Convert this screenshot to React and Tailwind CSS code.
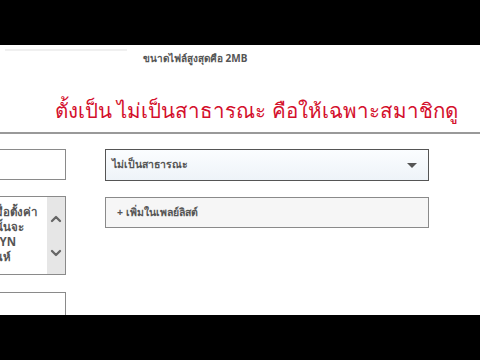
import { ChevronUp, ChevronDown } from "lucide-react";

const thai = { fontFamily: '"Noto Sans", "DejaVu Sans", sans-serif' };

export default function App() {
  return (
    <div className="w-[480px] h-[360px] bg-black flex flex-col overflow-hidden" style={thai}>
      <div className="h-[45px] shrink-0" />

      <div className="h-[270px] shrink-0 bg-white flex flex-col overflow-hidden">
        <div className="flex items-start">
          <div className="w-[122px] h-[2px] bg-[#f0f0f0] ml-[5px] mt-[4px]" />
          <p className="ml-[16px] mt-[7px] text-[10px] leading-[12px] font-bold text-[#555] whitespace-nowrap">
            ขนาดไฟล์สูงสุดคือ 2MB
          </p>
        </div>

        <h1 className="mt-[30px] ml-[55px] text-[20.5px] leading-[32px] text-[#d4102c] whitespace-nowrap">
          ตั้งเป็น ไม่เป็นสาธารณะ คือให้เฉพาะสมาชิกดู
        </h1>

        <div className="mt-[6px] h-[2px] shrink-0 bg-[#999]" />

        <div className="flex gap-[39px] mt-[15px]">
          {/* left column, cut off by the frame edge */}
          <div className="w-[66px] shrink-0 flex flex-col">
            <div className="h-[31px] border border-l-0 border-[#8a8a8a] bg-white" />

            <div className="mt-[16px] h-[79px] border border-l-0 border-[#8a8a8a] flex">
              <div className="flex-1 min-w-0 overflow-hidden flex flex-col items-end pt-[7px] text-[11.5px] leading-[15px] font-bold text-[#555] whitespace-nowrap">
                <span className="mr-[10px]">เมื่อตั้งค่า</span>
                <span className="mr-[23px]">หลังจากนั้นจะ</span>
                <span className="mr-[31px]">ดูวิดีโอ YN</span>
                <span className="mr-[36px]">ของคุณห์</span>
              </div>
              <div className="w-[18px] shrink-0 bg-[#e6e6e6] flex flex-col items-center justify-center gap-[18px] text-[#666]">
                <ChevronUp size={16} strokeWidth={3.5} />
                <ChevronDown size={16} strokeWidth={3.5} />
              </div>
            </div>

            <div className="mt-[17px] h-[40px] border border-l-0 border-[#8a8a8a] bg-white" />
          </div>

          {/* right column */}
          <div className="w-[324px] shrink-0 flex flex-col gap-[16px]">
            <div className="h-[32px] border border-[#555] bg-gradient-to-b from-[#fbfdff] to-[#eef3f8] flex items-center justify-between pl-[6px] pr-[11px]">
              <span className="text-[10.5px] font-bold text-[#555]">ไม่เป็นสาธารณะ</span>
              <span className="w-0 h-0 border-l-[5px] border-r-[5px] border-t-[5px] border-l-transparent border-r-transparent border-t-[#555]" />
            </div>
            <div className="h-[31px] border border-[#8a8a8a] bg-[#f6f6f6] flex items-center pl-[11px]">
              <span className="text-[10.5px] font-bold text-[#555]">+ เพิ่มในเพลย์ลิสต์</span>
            </div>
          </div>
        </div>
      </div>

      <div className="h-[45px] shrink-0" />
    </div>
  );
}
